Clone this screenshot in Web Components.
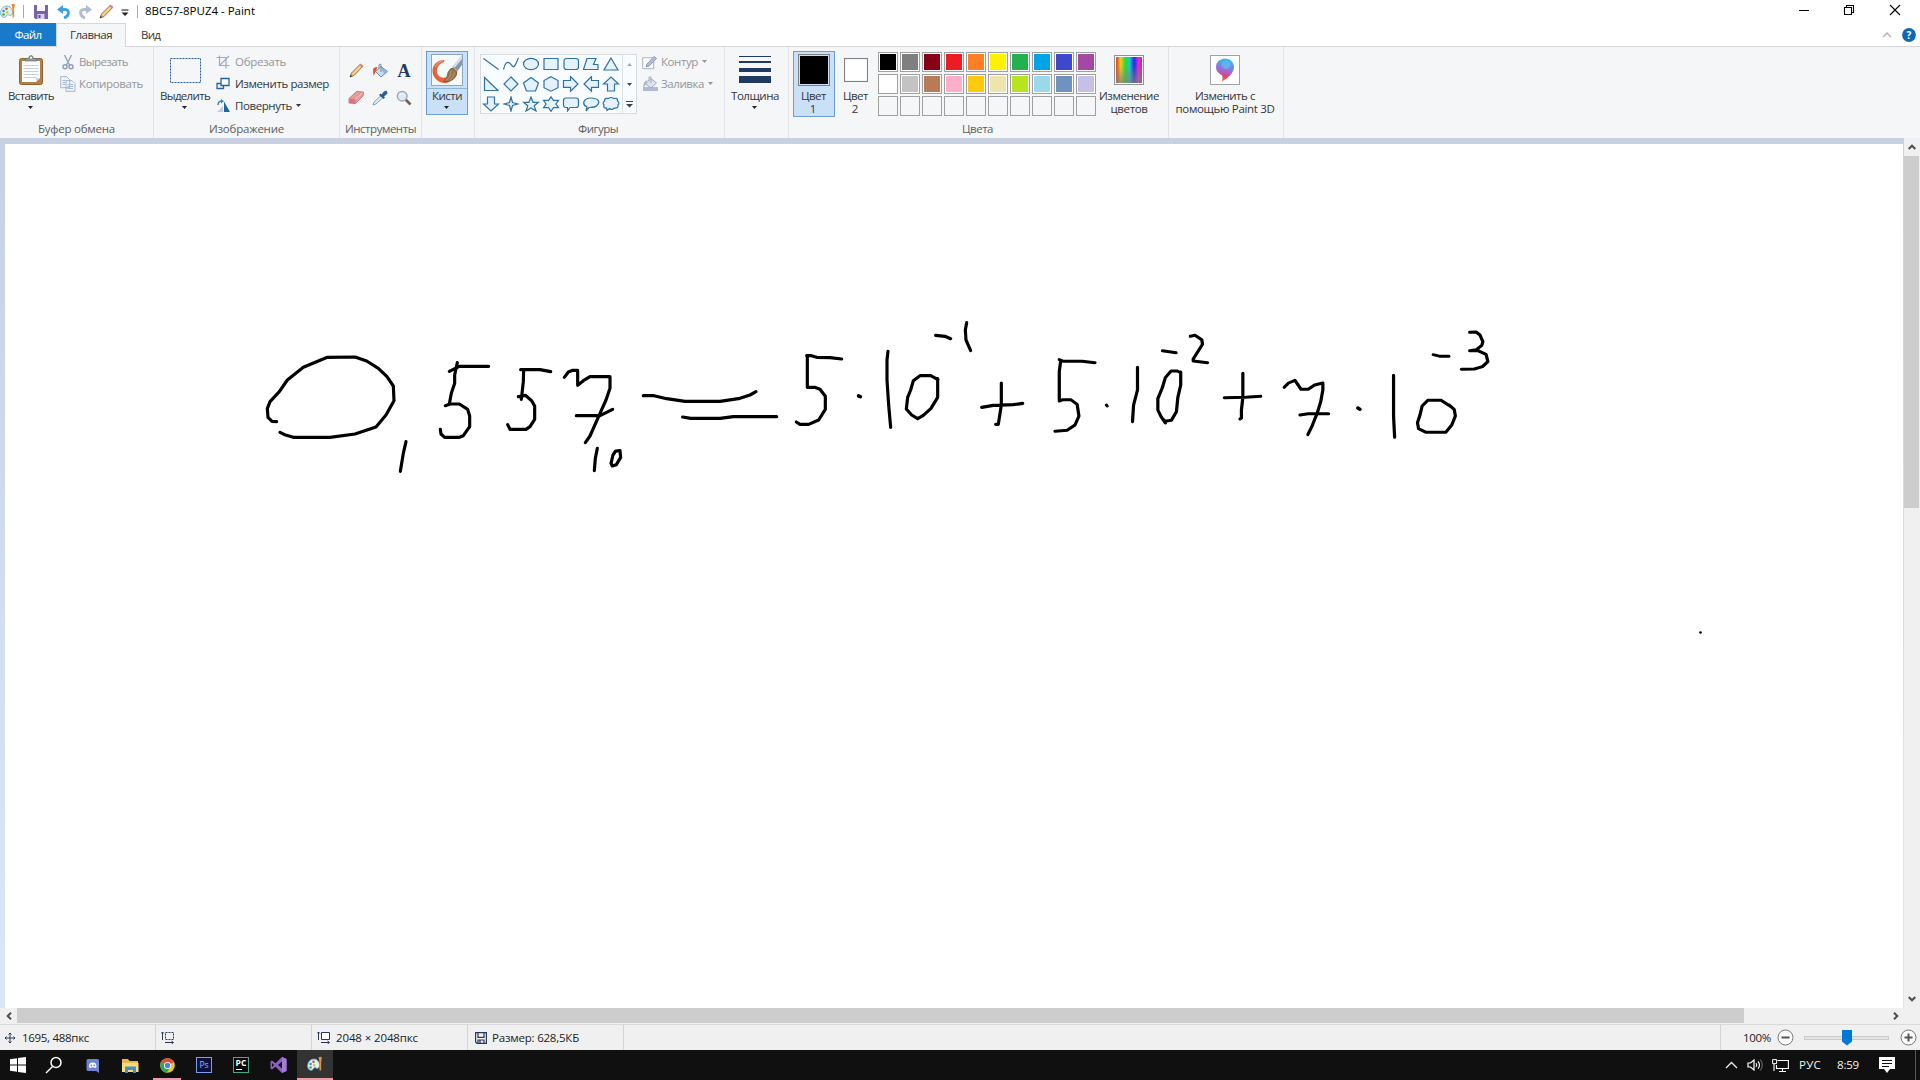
<!DOCTYPE html>
<html lang="ru">
<head>
<meta charset="utf-8">
<title>8BC57-8PUZ4 - Paint</title>
<style>
  html, body {
    margin: 0;
    width: 1920px;
    height: 1080px;
    overflow: hidden;
    background: #fff;
    font: 11.5px/16px "Open Sans", "Noto Sans", sans-serif;
    color: #33353a;
  }
</style>
</head>
<body>
<paint-app></paint-app>

<script>
const ICONS = {
  palette: [16, 16, `<path d="M7 3C3 3 .6 6.500.6 10c0 3 2 4.800 4.200 4.300 1.800-.4 1.200-2.600 3-2.600s2.200 1.500 3.700.3C14 9.500 12 3 7 3z" fill="#dff0f6" stroke="#5f9fbe" stroke-width=".8"/><circle cx="3.600" cy="8" r="1.300" fill="#3c8ed0"/><circle cx="6.500" cy="5.700" r="1.300" fill="#d9573c"/><circle cx="3.600" cy="11.500" r="1.300" fill="#48a65a"/><circle cx="7.200" cy="9.200" r="1.200" fill="#e9bd2f"/><path d="M11.500 1.500q1.700-1.500 3.500 0l-.8 4.500v8.500h-1.700V6z" fill="#df913b"/>`],
  save: [14, 14, `<path d="M0 0h14v14H1.500L0 12.500z" fill="#7c62a8"/><path d="M3 0h8v6H3z" fill="#fbf9ff"/><path d="M3.500 9h7v5h-7z" fill="#d9d1ea"/><path d="M4.500 10h2v3h-2z" fill="#65499b"/>`],
  undo: [14, 14, `<path d="M2 4.500h6c5 0 4.500 6.500-1 8.500" fill="none" stroke="#3aa3df" stroke-width="2.800"/><path d="M6 0v9L0 4.500z" fill="#3aa3df"/>`],
  redo: [14, 14, `<path d="M12 4.500H6c-5 0-4.500 6.500 1 8.500" fill="none" stroke="#aebdce" stroke-width="2.800"/><path d="M8 0v9l6-4.500z" fill="#aebdce"/>`],
  pencil: [15, 15, `<path d="M1 14l1.500-4L11 1.500l2.300 2.300L5 12.500z" fill="#f5c67b" stroke="#8d6642" stroke-width=".9"/><path d="M10.500 1.500l1-1 3 2.500-1.300 1.400z" fill="#d98277"/><path d="M1 14l.7-2.300 1.600 1.600z" fill="#333"/><path d="M4 10.500L11 4" stroke="#fbe1a6"/>`],
  qat: [8, 8, `<path d="M.5 1h7" stroke="#333" stroke-width="1.200"/><path d="M.5 3.500h7L4 7z" fill="#222"/>`],
  minimize: [12, 12, `<path d="M1 6.500h10" stroke="#000"/>`],
  restore: [12, 12, `<path d="M1.500 3.500h7v7h-7zM3.500 3V1.500h7v7H9" fill="none" stroke="#000" stroke-width="1.100"/>`],
  close: [12, 12, `<path d="M1 1l10 10M11 1L1 11" stroke="#000" stroke-width="1.100"/>`],
  collapse: [10, 6, `<path d="M1 5l4-4 4 4" fill="none" stroke="#b5b2b2" stroke-width="1.500"/>`],
  help: [14, 14, `<circle cx="7" cy="7" r="6.900" fill="#0f67b7"/>`],

  paste: [26, 31, `<rect x="1.500" y="3.500" width="23" height="26" rx="2" fill="#b38045" stroke="#8e6437"/><path d="M4 6h18v17l-4 4H4z" fill="#fff"/><path d="M5.500 10.500h15M5.500 13.500h15M5.500 16.500h15M5.500 19.500h15M5.500 22.500h13" stroke="#bcd3e4"/><path d="M22 23l-4 4v-4z" fill="#cbd4dd"/><path d="M7 6V3.500h3.500Q11 .5 13 .5t2.500 3H19V6z" fill="#8f979d" stroke="#686e73" stroke-width=".7"/><circle cx="13" cy="2.700" r="1" fill="#fff"/>`],
  cut: [16, 16, `<path d="M4.500 1l5 10M11.500 1l-5 10" stroke="#9aaac4" stroke-width="1.600"/><circle cx="5" cy="12.800" r="2" fill="none" stroke="#8b9dbd" stroke-width="1.400"/><circle cx="11" cy="12.800" r="2" fill="none" stroke="#8b9dbd" stroke-width="1.400"/>`],
  copy: [16, 16, `<path d="M.7.7h6l3 3v8h-9zM6 4.600h6l3 3v7.700H6z" fill="#f2f6fb" stroke="#a7b6cc"/><path d="M2.500 4.500h3M2.500 6.500h3M2.500 8.500h3M7.500 8.500h5.500M7.500 10.500h5.500M7.500 12.500h5.500" stroke="#a9bbd3"/>`],
  select: [31, 25, `<rect x=".5" y=".5" width="30" height="24" fill="none" stroke="#2c5b99" stroke-dasharray="2 1"/>`],
  crop: [14, 14, `<path d="M.500 2.500h9.500v11M3.500.500v10h10M3.500 10.500L13 1" fill="none" stroke="#9cacc6" stroke-width="1.200"/>`],
  resize: [14, 14, `<path d="M5 1.500h8v7H5z" fill="#f7fafd" stroke="#27649b" stroke-width="1.300"/><path d="M5 6.500H1v5h6.500v-3" fill="none" stroke="#27649b" stroke-width="1.300"/>`],
  rotate: [15, 14, `<path d="M8 2.500l6 10.500H8z" fill="#1d669f"/><path d="M7 7v6H1z" fill="#c0cfda"/><path d="M2 6q0-4 4-4" fill="none" stroke="#3f87bd" stroke-width="1.500"/><path d="M5 0l3 2.200L5 4.500z" fill="#3f87bd"/>`],

  bucket: [17, 16, `<path d="M3.500 8.500L9 3.500l6.500 5-6.500 5.500z" fill="#cadbed" stroke="#718ba9"/><path d="M9 9V1.500Q8 .2 7 2v3" fill="none" stroke="#73879e"/><path d="M9 4l6 4.500-3 2.500z" fill="#8bb2dc"/><path d="M5.500 4Q1 4 1 7l.5 6 2-4z" fill="#d6592e"/>`],
  eraser: [16, 15, `<path d="M1 8.500L8.500 1.500l7 .5-.5 4L7.500 13.500 1 13z" fill="#e99a98" stroke="#b36b6d" stroke-width=".8"/><path d="M1 8.700l6.500.4v4.300L1 13z" fill="#dd7376"/><path d="M7.500 9l7.500-6.500" stroke="#f6c6c2"/>`],
  picker: [16, 16, `<path d="M1 15l1-3 7-6.500 2 2L4 14z" fill="#dbe8f1" stroke="#7992a9" stroke-width=".8"/><path d="M7 5l1.500-1.500 1 1L12 1.500q2-1.500 3 0t0 2.500L12 6.500l1 1L11.500 9z" fill="#285f99"/>`],
  zoom: [16, 16, `<path d="M9.500 9.500l5 5" stroke="#6d625c" stroke-width="2.600"/><circle cx="6.200" cy="6.200" r="4.800" fill="#dceaf5" stroke="#9babba" stroke-width="1.500"/><path d="M3.500 5.500q1-2 3-2" fill="none" stroke="#fff"/>`],
  brush: [32, 32, `<rect x=".5" y=".5" width="31" height="31" fill="#f7fafb" stroke="#8da7c2"/><path d="M13.500 6C5 6 1 12 1.500 18c.5 6 6 11 12 11 4 0 7-2 8-5l-3-3c-2 3-8 4-11 .5C4 17 6 10.500 13 8z" fill="#e2643c"/><path d="M4 13q2-5 8-6.500" fill="none" stroke="#f3a58c"/><path d="M31 1.500v9.500l-4.500 6-5-4z" fill="#8497ac"/><path d="M31 1.500L21.500 12l2.200 1.800L31 5z" fill="#d3dee9"/><path d="M17 18.500q2-4.500 5-4.500l4 3.500q.500 4-4 8-4 3-9.500 2Q16.500 24 17 18.500z" fill="#94754d" stroke="#765a3b" stroke-width=".8"/><path d="M20 17q0 6-5 9.500M23.500 18.500q-1 5-5.500 8" fill="none" stroke="#bd9c6c"/>`],
  outline: [16, 15, `<path d="M.7 2.700h11v11H.7z" fill="#fafbfe" stroke="#a8b4ca"/><path d="M4 12l1-3 7-7.500 2.500 2L7 11z" fill="#b5bbd4" stroke="#8e9abb"/>`],
  fill: [17, 16, `<path d="M1 11h15v4H1z" fill="#aebbd0"/><path d="M3.500 8L9 2.500 14.500 7 9 12z" fill="#dce3ed" stroke="#9eacc2"/><path d="M9 7V1H7v4" fill="none" stroke="#9eacc2"/><path d="M5.500 4Q1 5 1.500 12L4 8z" fill="#a3b2cb"/>`],
  size: [32, 28, `<path d="M0 0h32v1H0zM0 5h32v2H0zM0 12h32v4H0zM0 20h32v7H0z" fill="#20395f"/>`],
  down: [5, 3, `<path d="M0 0h5L2.500 3z" fill="currentColor"/>`],
  up: [5, 3, `<path d="M0 3h5L2.500 0z" fill="currentColor"/>`],
  more: [7, 7, `<path d="M0 0h7v1H0zM0 3h7L3.500 6.500z" fill="currentColor"/>`],
  spectrum: [30, 30, `<defs><linearGradient id="h"><stop offset="0" stop-color="#e33b1c"/><stop offset=".18" stop-color="#e5d321"/><stop offset=".36" stop-color="#27dc31"/><stop offset=".52" stop-color="#18c8da"/><stop offset=".7" stop-color="#2e27dc"/><stop offset=".87" stop-color="#e02bdc"/><stop offset="1" stop-color="#d3246b"/></linearGradient><linearGradient id="v" x2="0" y2="1"><stop offset=".3" stop-color="#808080" stop-opacity="0"/><stop offset="1" stop-color="#808080" stop-opacity=".75"/></linearGradient></defs><rect x=".5" y=".5" width="29" height="29" fill="#fff" stroke="#929292"/><path d="M2 2h26v26H2z" fill="url(#h)"/><path d="M2 2h26v26H2z" fill="url(#v)"/>`],
  paint3d: [30, 30, `<defs><linearGradient id="p" x1=".6" y1="0" x2=".4" y2="1"><stop offset="0" stop-color="#35c0ea"/><stop offset=".38" stop-color="#7387e5"/><stop offset=".6" stop-color="#b759c5"/><stop offset=".78" stop-color="#e83d67"/><stop offset="1" stop-color="#f17d35"/></linearGradient></defs><rect x=".5" y=".5" width="29" height="29" fill="#fff" stroke="#a0a3a6"/><path d="M15 3.500c-5 0-9 3.600-9 8.500 0 4.500 3 6 6 8.500 1.300 1.500 0 3.500 0 6 5-3 12-8 12-14.500 0-5-4-8.500-9-8.500z" fill="url(#p)"/><circle cx="16" cy="10" r="4" fill="#69d5f5" opacity=".45"/>`],

  arrowUp: [8, 6, `<path d="M.700 5L4 1.700 7.300 5" fill="none" stroke="#4d4d4d" stroke-width="2"/>`],
  arrowDown: [8, 6, `<path d="M.700 1L4 4.300 7.300 1" fill="none" stroke="#4d4d4d" stroke-width="2"/>`],
  arrowLeft: [6, 8, `<path d="M5 .7L1.700 4 5 7.300" fill="none" stroke="#4d4d4d" stroke-width="2"/>`],
  arrowRight: [6, 8, `<path d="M1 .7L4.300 4 1 7.300" fill="none" stroke="#4d4d4d" stroke-width="2"/>`],
  move: [12, 12, `<path d="M6 1v10M1 6h10M4.500 2.500L6 1l1.500 1.500M4.500 9.500L6 11l1.500-1.500M2.500 4.500L1 6l1.500 1.500M9.500 4.500L11 6 9.500 7.500" fill="none" stroke="#24395b"/>`],
  selSize: [14, 13, `<path d="M4.500 1.500h8v7h-8z" fill="none" stroke="#24395b" stroke-dasharray="2 1"/><path d="M1.500 9V1M0 2.500L1.500 1 3 2.500M4 11.500h8M10.500 10l2 1.500-2 1.500" fill="none" stroke="#24395b"/>`],
  imgSize: [14, 13, `<path d="M4.500 1.500h8v7h-8z" fill="#fff" stroke="#24395b"/><path d="M1.500 9V1M0 2.500L1.500 1 3 2.500M4 11.500h8M10.500 10l2 1.500-2 1.500" fill="none" stroke="#24395b"/>`],
  disk: [12, 12, `<path d="M.6.600h10.800v10.800H2L.6 10zM3 .600v4.800h6V.600M3 11V8h6v3M5 8.500V11" fill="none" stroke="#24395b" stroke-width="1.200"/>`],
  zoomOut: [17, 17, `<circle cx="8.500" cy="8.500" r="7.500" fill="#fafafa" stroke="#777"/><path d="M4.500 8.500h8" stroke="#555" stroke-width="2"/>`],
  zoomIn: [17, 17, `<circle cx="8.500" cy="8.500" r="7.500" fill="#fafafa" stroke="#777"/><path d="M4.500 8.500h8M8.500 4.500v8" stroke="#555" stroke-width="2"/>`],

  windows: [16, 16, `<path d="M0 2.300L7 1.300v6.200H0zM8 1.100L16 0v7.500H8zM0 8.500h7v6.200l-7-1zM8 8.500h8V16l-8-1.100z" fill="#fff"/>`],
  search: [18, 18, `<circle cx="11" cy="6.500" r="5" fill="none" stroke="#fff" stroke-width="1.500"/><path d="M7.500 10.500L1 17" stroke="#fff" stroke-width="1.500"/>`],
  discord: [14, 15, `<path d="M2 1h9.500q1.500 0 1.500 1.500V15l-3-2H2q-1.500 0-1.500-1.500v-9Q.5 1 2 1z" fill="#6f83cf"/><path d="M3 9q0-3 1.200-4 2.500-1 5 0Q10.500 6 10.500 9q-1 1-2.200 1l-.5-.7H5.700l-.5.7Q4 10 3 9z" fill="#fff"/><circle cx="5.300" cy="7.500" r=".9" fill="#6f83cf"/><circle cx="8.300" cy="7.500" r=".9" fill="#6f83cf"/>`],
  explorer: [17, 15, `<path d="M0 1h6l1.500 2H16v11H0z" fill="#e9b64a"/><path d="M0 5h16.500v9H0z" fill="#ffdb76"/><path d="M3 8.500h11V15h-3v-3H6v3H3z" fill="#3c93cf"/>`],
  chrome: [15, 15, `<circle cx="7.500" cy="7.500" r="7.300" fill="#e8c632"/><path d="M7.500 7.500L1 4Q3.500.2 7.500.2T14 4z" fill="#dc4b3e"/><path d="M7.500 7.500L1 4Q-.8 8 1.500 11.500T7 14.800l3-5.500z" fill="#36a35a"/><circle cx="7.500" cy="7.500" r="3.500" fill="#fff"/><circle cx="7.500" cy="7.500" r="2.700" fill="#4384dd"/>`],
  vs: [17, 16, `<path d="M12 0l4.500 2v12L12 16 5.500 9.800 2 12.500.5 11.500v-7L2 3.500l3.500 2.700zM12 4.500L8 8l4 3.500zM2 6v4l2-2z" fill="#8c5fc5" fill-rule="evenodd"/><path d="M12 0l4.500 2v12L12 16z" fill="#a47ad8"/>`],
  chevron: [13, 8, `<path d="M1 7l5.500-5.500L12 7" fill="none" stroke="#eee" stroke-width="1.300"/>`],
  speaker: [17, 14, `<path d="M1 5h2.500l3.500-3v10L3.500 9H1z" fill="none" stroke="#fff" stroke-width="1.200"/><path d="M9 5q1.500 2 0 4M11 3.300q3 3.700 0 7.400" fill="none" stroke="#fff" stroke-width="1.100"/><path d="M13.300 1.500q4 5.500 0 11" fill="none" stroke="#777"/>`],
  network: [17, 15, `<path d="M5.500 2.500h10.900v8H4.500v-3.500M10.500 10.500V14M7 13.500h7M2 6v7" fill="none" stroke="#fff" stroke-width="1.100"/><path d="M.600 1.600h4v4h-4z" fill="#111" stroke="#fff"/>`],
  notice: [16, 16, `<path d="M0 0h16v12h-5l-3 4-3-4H0z" fill="#fff"/><path d="M3 3.500h10M3 6.500h10M3 9.500h7" stroke="#111"/>`],
};

const SHAPES = [
  '<path d="M1.500 2.500l15 11"/>',
  '<path d="M1.500 13.500C3 7 5 5 7.500 7s3 5 5 3 3-7 4-8"/>',
  '<ellipse cx="9" cy="8" rx="7.500" ry="5.700"/>',
  '<path d="M2 2.500h14v11H2z"/>',
  '<rect x="2" y="2.500" width="14.500" height="11" rx="2.500"/>',
  '<path d="M5 2.500h9l-2.500 6H16v5H1.500z"/>',
  '<path d="M9 2l7 12H2z"/>',
  '<path d="M2.500 1.500v13H16z"/>',
  '<path d="M9 1l7 7-7 7-7-7z"/>',
  '<path d="M9 1.500l7.500 5.500-3 8h-9l-3-8z"/>',
  '<path d="M9 .800l7 3.700v7.200l-7 3.500-7-3.500V4.500z"/>',
  '<path d="M1.500 4.500h7v-4L16 8l-7.500 7.300v-4h-7z"/>',
  '<path d="M16.500 4.500h-7v-4L2 8l7.500 7.300v-4h7z"/>',
  '<path d="M5.500 15V8h-4L9 1l7.500 7h-4v7z"/>',
  '<path d="M5.500 1v7h-4L9 15l7.500-7h-4V1z"/>',
  '<path d="M9 1l1.500 5.500L16 8l-5.500 1.500L9 15l-1.500-5.500L2 8l5.500-1.500z"/>',
  '<path d="M9 1l2 5.300h5.500l-4.300 3.500L14 15l-5-3-5 3 1.800-5.200L1.500 6.300H7z"/>',
  '<path d="M9 .800l2.500 3.600h5L14 8l2.500 3.700h-5L9 15.300l-2.500-3.600h-5L4 8 1.500 4.400h5z"/>',
  '<path d="M4 2h10q2.500 0 2.500 2.500V9q0 2.500-2.500 2.500H8L5.500 15v-3.500H4Q1.500 11.500 1.500 9V4.500Q1.500 2 4 2z"/>',
  '<path d="M5 11C-1 8 2 2 9 2s10 4 6 7.500c-2 2-5 2-8 2L4 15z"/>',
  '<path d="M4.500 12Q1 12.500 2 9q-2-2 .5-4 0-3.500 4-2.500Q9 .5 11.500 2.500 16 1.500 15.500 5q2.500 2 .5 4 .5 3.500-3.500 3-3 2.500-5 .5L5 14.500z"/>',
];

const PALETTE = [
  '#000000', '#7f7f7f', '#880015', '#ed1c24', '#ff7f27', '#fff200', '#22b14c', '#00a2e8', '#3f48cc', '#a349a4',
  '#ffffff', '#c3c3c3', '#b97a57', '#ffaec9', '#ffc90e', '#efe4b0', '#b5e61d', '#99d9ea', '#7092be', '#c8bfe7',
];

function define(name, html, setup) {
  const template = document.createElement('template');
  template.innerHTML = html;

  customElements.define(name, class extends HTMLElement {
    connectedCallback() {
      if (this.shadowRoot) return;
      this.attachShadow({ mode: 'open' });
      this.shadowRoot.appendChild(template.content.cloneNode(true));
      if (setup) setup(this, this.shadowRoot);
    }
  });
}

// Inline svg from the ICONS table
define('ui-icon', `
  <style>
    :host { display: block; flex: none; }
    svg { display: block; }
  </style>
`, (host, root) => {
  const [w, h, body] = ICONS[host.getAttribute('name')];
  root.innerHTML += `<svg width="${w}" height="${h}" viewBox="0 0 ${w} ${h}">${body}</svg>`;
});

// One line of text, tracked so that it takes up "fit" pixels
define('ui-text', `
  <style>
    :host { display: block; flex: none; white-space: nowrap; }
    span { display: inline-block; }
  </style>
  <span><slot></slot></span>
`, (host, root) => {
  const fit = Number(host.getAttribute('fit'));
  if (!fit) return;
  const span = root.querySelector('span');
  const gap = (fit - span.getBoundingClientRect().width) / host.textContent.length;
  span.style.letterSpacing = gap.toFixed(3) + 'px';
  host.style.width = fit + 'px';
});

define('title-bar', `
  <style>
    :host { display: flex; align-items: center; height: 23px; background: #fff; color: #000; }
    .sep { width: 1px; height: 13px; background: #aaa; }
    .window { display: flex; align-items: center; gap: 34px; margin: -3px 19px 0 auto; }
  </style>
  <ui-icon name="palette" style="margin-top: -2px"></ui-icon>
  <i class="sep" style="margin: 0 10px 0 7px"></i>
  <ui-icon name="save"></ui-icon>
  <ui-icon name="undo" style="margin-left: 9px"></ui-icon>
  <ui-icon name="redo" style="margin-left: 7px"></ui-icon>
  <ui-icon name="pencil" style="margin-left: 7px"></ui-icon>
  <ui-icon name="qat" style="margin: 2px 0 0 7px"></ui-icon>
  <i class="sep" style="margin: 0 7px 0 8px"></i>
  <ui-text fit="110" style="margin-top: -1px">8BC57-8PUZ4 - Paint</ui-text>
  <div class="window">
    <ui-icon name="minimize" style="margin-right: -1px"></ui-icon>
    <ui-icon name="restore"></ui-icon>
    <ui-icon name="close"></ui-icon>
  </div>
`);

define('ribbon-tabs', `
  <style>
    :host { display: flex; height: 24px; box-sizing: border-box; border-bottom: 1px solid #d5d7da; background: #fff; }
    .tab { display: flex; justify-content: center; padding-top: 4px; box-sizing: border-box; }
    .file { width: 56px; background: #1979ca; color: #fff; }
    .active { width: 70px; height: 24px; border: 1px solid #d5d7da; border-bottom: 0; padding-top: 3px; background: #f5f6f7; }
    .view { width: 49px; }
    .right { display: flex; align-items: center; gap: 10px; margin: 0 4px 0 auto; }
    .help { display: grid; color: #fff; font-weight: 700; font-size: 10px; line-height: 14px; text-align: center; }
    .help > * { grid-area: 1 / 1; }
  </style>
  <div class="tab file"><ui-text fit="27">Файл</ui-text></div>
  <div class="tab active"><ui-text fit="42">Главная</ui-text></div>
  <div class="tab view"><ui-text fit="19">Вид</ui-text></div>
  <div class="right">
    <ui-icon name="collapse"></ui-icon>
    <div class="help"><ui-icon name="help"></ui-icon><span>?</span></div>
  </div>
`);

define('ribbon-group', `
  <style>
    :host { display: flex; flex-direction: column; flex: none; box-sizing: border-box; height: 91px;
      border-right: 1px solid #e1e3e6; }
    .body { display: flex; align-items: flex-start; height: 74px; padding-top: 4px; box-sizing: border-box; }
    .label { display: flex; justify-content: center; padding-right: var(--label-end, 0); color: #5c5f63; }
  </style>
  <div class="body"><slot></slot></div>
  <div class="label"></div>
`, (host, root) => {
  const text = host.getAttribute('label');
  if (text) root.querySelector('.label').innerHTML = `<ui-text fit="${host.getAttribute('fit')}">${text}</ui-text>`;
});

// Tall button: picture on top, caption lines below it
define('big-button', `
  <style>
    :host { display: flex; flex-direction: column; align-items: center; flex: none; box-sizing: border-box; height: 66px; }
    .pic { display: flex; align-items: center; justify-content: center; box-sizing: border-box; height: 37px; padding-top: 1px; flex: none; }
    .text { display: flex; flex-direction: column; align-items: center; line-height: 16px; }
    ::slotted(ui-text:nth-of-type(2)) { margin-top: -3px; }
    ui-icon { margin: 2px 1px 0 0; color: #222; }
    :host([active]) { background: #c9e0f7; box-shadow: inset 0 0 0 1px #6c9ed0; }
  </style>
  <div class="pic"><slot name="pic"></slot></div>
  <div class="text"><slot></slot></div>
`, (host, root) => {
  if (host.hasAttribute('menu')) root.innerHTML += '<ui-icon name="down"></ui-icon>';
});

define('row-button', `
  <style>
    :host { display: flex; align-items: center; height: 22px; }
    .pic { display: flex; align-items: center; width: 19px; flex: none; }
    .arrow { margin: -1px 0 0 4px; }
    :host([disabled]) { color: #93969b; }
  </style>
  <div class="pic"></div>
  <slot></slot>
`, (host, root) => {
  root.querySelector('.pic').innerHTML = `<ui-icon name="${host.getAttribute('icon')}"></ui-icon>`;
  if (host.hasAttribute('menu')) root.innerHTML += '<ui-icon class="arrow" name="down"></ui-icon>';
});

define('tool-grid', `
  <style>
    :host { display: grid; grid-template-columns: repeat(3, 24px); grid-auto-rows: 27px; place-items: center; }
    b { font: bold 18px/18px "Liberation Serif", serif; color: #1e3a63; }
  </style>
  <ui-icon name="pencil"></ui-icon>
  <ui-icon name="bucket"></ui-icon>
  <b>A</b>
  <ui-icon name="eraser"></ui-icon>
  <ui-icon name="picker"></ui-icon>
  <ui-icon name="zoom"></ui-icon>
`);

define('shape-gallery', `
  <style>
    :host { display: flex; box-sizing: border-box; width: 157px; height: 60px; border: 1px solid #d6dbe0; background: #f9fcfe; }
    .shapes { display: grid; grid-template-columns: repeat(7, 20px); grid-auto-rows: 20px; align-content: start; width: 141px; margin-top: -1px; }
    svg { width: 18px; height: 16px; margin: 2px 1px; fill: #e4f3fb; stroke: #31709f; stroke-width: 1.2; }
    svg.line { fill: none; }
    .scroll { display: grid; grid-template-rows: repeat(3, 20px); place-items: center; flex: 1; border-left: 1px solid #dde2e6; margin-top: -1px; color: #444; }
  </style>
  <div class="shapes"></div>
  <div class="scroll">
    <ui-icon name="up" style="color: #aaa"></ui-icon>
    <ui-icon name="down"></ui-icon>
    <ui-icon name="more"></ui-icon>
  </div>
`, (host, root) => {
  root.querySelector('.shapes').innerHTML = SHAPES
    .map((shape, i) => `<svg class="${i < 2 ? 'line' : ''}" viewBox="0 0 18 16">${shape}</svg>`)
    .join('');
});

define('color-grid', `
  <style>
    :host { display: grid; grid-template-columns: repeat(10, 20px); grid-auto-rows: 20px; gap: 2px; }
    i { box-sizing: border-box; border: 1px solid #a0a0a0; }
    i.set { padding: 1px; background-clip: content-box; box-shadow: inset 0 0 0 1px #fff; }
  </style>
`, (host, root) => {
  for (let n = 0; n < 30; n++) {
    const cell = document.createElement('i');
    if (PALETTE[n]) {
      cell.className = 'set';
      cell.style.backgroundColor = PALETTE[n];
    }
    root.appendChild(cell);
  }
});

define('paint-ribbon', `
  <style>
    :host { display: flex; height: 91px; background: #f5f6f7; }
    .rows { display: flex; flex-direction: column; }
    .swatch { box-sizing: border-box; border: 1px solid #808080; background-clip: content-box; padding: 1px; }
    .brushes { background: linear-gradient(#8ab4dc, #8ab4dc) 1px 37px / 40px 1px no-repeat #c9e0f7; }
  </style>
  <ribbon-group label="Буфер обмена" fit="77" style="width: 154px">
    <big-button menu style="width: 62px">
      <ui-icon slot="pic" name="paste"></ui-icon>
      <ui-text fit="46">Вставить</ui-text>
    </big-button>
    <div class="rows" style="margin-left: -2px">
      <row-button disabled icon="cut"><ui-text fit="49">Вырезать</ui-text></row-button>
      <row-button disabled icon="copy"><ui-text fit="64">Копировать</ui-text></row-button>
    </div>
  </ribbon-group>

  <ribbon-group label="Изображение" fit="75" style="width: 186px">
    <big-button menu style="width: 62px">
      <ui-icon slot="pic" name="select"></ui-icon>
      <ui-text fit="50">Выделить</ui-text>
    </big-button>
    <div class="rows">
      <row-button disabled icon="crop"><ui-text fit="51">Обрезать</ui-text></row-button>
      <row-button icon="resize"><ui-text fit="94">Изменить размер</ui-text></row-button>
      <row-button menu icon="rotate"><ui-text fit="57">Повернуть</ui-text></row-button>
    </div>
  </ribbon-group>

  <ribbon-group label="Инструменты" fit="71" style="width: 82px">
    <tool-grid style="margin: 6px 0 0 4px"></tool-grid>
  </ribbon-group>

  <ribbon-group style="width: 53px">
    <big-button class="brushes" active menu style="width: 42px; height: 64px; margin-left: 4px">
      <ui-icon slot="pic" name="brush"></ui-icon>
      <ui-text fit="30">Кисти</ui-text>
    </big-button>
  </ribbon-group>

  <ribbon-group label="Фигуры" fit="40" style="width: 250px; --label-end: 3px">
    <shape-gallery style="margin: 3px 5px 0 5px"></shape-gallery>
    <div class="rows">
      <row-button disabled menu icon="outline"><ui-text fit="37">Контур</ui-text></row-button>
      <row-button disabled menu icon="fill"><ui-text fit="43">Заливка</ui-text></row-button>
    </div>
  </ribbon-group>

  <ribbon-group style="width: 64px">
    <big-button menu style="width: 60px">
      <ui-icon slot="pic" name="size"></ui-icon>
      <ui-text fit="48">Толщина</ui-text>
    </big-button>
  </ribbon-group>

  <ribbon-group label="Цвета" fit="31" style="width: 380px; --label-end: 2px">
    <big-button active style="width: 42px; margin-left: 4px">
      <i slot="pic" class="swatch" style="width: 32px; height: 32px; background-color: #000"></i>
      <ui-text fit="25" style="margin-right: 1px">Цвет</ui-text>
      <ui-text style="margin-right: 2px">1</ui-text>
    </big-button>
    <big-button style="width: 42px">
      <i slot="pic" class="swatch" style="width: 24px; height: 24px; background-color: #fff"></i>
      <ui-text fit="25" style="margin-right: 1px">Цвет</ui-text>
      <ui-text style="margin-right: 2px">2</ui-text>
    </big-button>
    <color-grid style="margin: 1px 0 0 1px"></color-grid>
    <big-button style="width: 66px">
      <ui-icon slot="pic" name="spectrum"></ui-icon>
      <ui-text fit="60">Изменение</ui-text>
      <ui-text fit="37">цветов</ui-text>
    </big-button>
  </ribbon-group>

  <ribbon-group style="width: 115px">
    <big-button style="width: 112px">
      <ui-icon slot="pic" name="paint3d"></ui-icon>
      <ui-text fit="60">Изменить с</ui-text>
      <ui-text fit="99">помощью Paint 3D</ui-text>
    </big-button>
  </ribbon-group>
`);

define('scroll-bar', `
  <style>
    :host { display: flex; align-items: flex-start; background: #f0f0f0; }
    :host([vertical]) { flex-direction: column; }
    .end { display: flex; align-items: center; justify-content: center; width: 17px; height: 15px; flex: none; }
    :host([vertical]) .end { width: 15px; height: 18px; }
    .thumb { background: #cdcdcd; width: var(--size); height: 15px; flex: none; }
    :host([vertical]) .thumb { width: 15px; height: var(--size); }
    .track { flex: 1; }
  </style>
`, (host, root) => {
  const [a, b] = host.hasAttribute('vertical') ? ['arrowUp', 'arrowDown'] : ['arrowLeft', 'arrowRight'];
  root.innerHTML += `
    <div class="end"><ui-icon name="${a}"></ui-icon></div>
    <div class="thumb"></div>
    <div class="track"></div>
    <div class="end"><ui-icon name="${b}"></ui-icon></div>
  `;
});

// The drawing itself, pen strokes three pixels wide
define('paint-canvas', `
  <style>
    :host { display: block; overflow: hidden; background: #fff; }
    svg { display: block; }
    g { fill: none; stroke: #000; stroke-linecap: round; stroke-linejoin: round; }
  </style>
  <svg width="1898" height="864" viewBox="5 144 1898 864">
    <g transform="translate(250 330) scale(.33333)" stroke-width="9.500">
      <path d="M80 275L66 274 54 262 52 236 60 215 88 185 112 150 160 112 232 82 315 81 350 93 385 115 411 140 430 168 432 212 408 255 378 291 315 312 240 322H130L104 314 90 307"/>
      <path d="M468 335L460 370 451 424"/>
      <path d="M622 98L614 135V160L604 190 598 222M598 124L628 109H716M586 227L600 222H628L653 238 659 258V290L640 317 628 322H584L573 312 571 298"/>
      <path d="M821 120L820 155 814 208M812 119H870L902 125M805 200L826 196 845 212 854 228V268L840 290 828 298H780L773 284"/>
      <path d="M943 142L955 126 968 121H983V166L1000 152 1020 140H1080V175L1068 210 1047 257 1020 318 1006 338M979 257H1050L1088 238"/>
      <path d="M1042 355L1036 385 1033 422M1110 363L1112 382 1099 404 1087 408 1083 400 1089 375 1097 363 1110 362"/>
    </g>
    <g transform="translate(630 310) scale(.33333)" stroke-width="9.500">
      <path d="M40 257H72L110 266 165 274H270L330 265 360 255 378 245"/>
      <path d="M158 321L182 325H270L310 320H440"/>
      <path d="M530 137H544L560 142 600 143 635 147M532 137V232H554L570 238 586 259V298L566 330 536 343H510L499 336"/>
      <path d="M686 258L691 260" stroke-width="11"/>
      <path d="M774 124L771 150V210L776 285 782 352"/>
      <path d="M924 209L902 197H870L850 212 842 240 833 262 829 297 845 315 863 326 880 316 903 295 923 262V206"/>
      <path d="M917 76L945 79 962 86M1010 38L1006 60 1008 90 1022 122"/>
      <path d="M1114 219V285L1105 343H1097M1055 292L1090 286 1150 284 1178 280"/>
    </g>
    <g transform="translate(960 310) scale(.35714 .33333)" stroke-width="9">
      <path d="M278 149L290 154H342L378 158M282 152L278 185V273L288 269H310L328 283 333 318 322 345 300 361 266 364"/>
      <path d="M410 285L412 288"/>
      <path d="M497 172V240L486 285 483 335"/>
      <path d="M618 188L608 183H591L575 203 566 235 554 266V300L563 320 575 339M618 186V225L610 262 606 305 592 331 575 334 566 325"/>
      <path d="M567 122L605 128M645 79L658 76 677 89 679 103 653 147V153L693 158"/>
      <path d="M792 190V262L788 300V324L784 327M740 263L800 262 842 259"/>
      <path d="M908 232L920 219 938 211 955 238H975L993 225 1016 219V240L1010 275 1000 310 985 350 974 374M952 315L975 311H1032"/>
      <path d="M1114 294L1120 298" stroke-width="10"/>
      <path d="M1214 196V320L1217 382"/>
      <path d="M1375 290L1347 271H1310L1294 288 1288 315 1281 338 1284 356 1305 367H1360L1377 345 1387 318 1384 299 1370 285"/>
      <path d="M1325 134L1345 139H1369M1427 67L1445 66 1456 75 1464 95 1461 106 1446 119 1427 122H1450L1473 133 1478 155 1463 170 1440 177 1404 178"/>
    </g>
    <circle cx="1700.500" cy="632.500" r="1.300"/>
  </svg>
`);

define('status-bar', `
  <style>
    :host { display: flex; align-items: stretch; height: 26px; background: #f0f0f0; color: #222; border-top: 1px solid #dadada; box-sizing: border-box; }
    .cell { display: flex; align-items: center; box-sizing: border-box; border-right: 1px solid #d4d4d4; }
    .zoom { display: flex; align-items: center; margin-left: auto; padding-left: 22px; border-left: 1px solid #d4d4d4; padding-right: 3px; }
    .slider { display: grid; align-items: center; width: 85px; margin: 0 11px 0 10px; }
    .slider > * { grid-area: 1 / 1; }
    .track { height: 4px; box-sizing: border-box; border: 1px solid #ccc; background: #e3e3e3; }
    .thumb { width: 10px; height: 16px; margin-left: 38px; background: #0078d7; clip-path: polygon(0 0, 100% 0, 100% 75%, 50% 100%, 0 75%); }
  </style>
  <div class="cell" style="width: 156px; padding-left: 4px"><ui-icon name="move"></ui-icon><ui-text fit="67" style="margin-left: 6px">1695, 488пкс</ui-text></div>
  <div class="cell" style="width: 156px; padding-left: 5px"><ui-icon name="selSize"></ui-icon></div>
  <div class="cell" style="width: 156px; padding-left: 5px"><ui-icon name="imgSize"></ui-icon><ui-text fit="82" style="margin-left: 5px">2048 × 2048пкс</ui-text></div>
  <div class="cell" style="width: 156px; padding-left: 7px"><ui-icon name="disk"></ui-icon><ui-text fit="87" style="margin-left: 5px">Размер: 628,5КБ</ui-text></div>
  <div class="zoom">
    <ui-text fit="28">100%</ui-text>
    <ui-icon name="zoomOut" style="margin-left: 6px"></ui-icon>
    <div class="slider"><div class="track"></div><div class="thumb"></div></div>
    <ui-icon name="zoomIn"></ui-icon>
  </div>
`);

define('task-bar', `
  <style>
    :host { display: flex; height: 30px; background: #101010; color: #f2f2f2; }
    .apps { display: flex; gap: 1px; }
    .app { display: flex; align-items: center; justify-content: center; box-sizing: border-box; width: 36px; }
    .app.running { border-bottom: 2px solid #eb9ba6; padding-top: 2px; width: 28px; margin: 0 4px; }
    .app.active { width: 36px; margin: 0; background: #333; }
    .box { box-sizing: border-box; width: 16px; height: 16px; border: 1px solid; font: 8.5px/13px "Open Sans", sans-serif; text-align: center; }
    .ps { background: #09113c; color: #9dbdff; border-color: #7f9dec; }
    .pc { background: #060a0a; color: #fff; border-color: #48a88a; font-weight: 700; line-height: 10px; }
    .pc::after { content: ''; display: block; width: 6px; height: 1px; margin: 1px 2px; background: #fff; }
    .tray { display: flex; align-items: center; margin-left: auto; padding-right: 4px; }
    .desk { width: 1px; height: 30px; background: #555; margin-left: 20px; }
  </style>
  <div class="apps">
    <div class="app"><ui-icon name="windows"></ui-icon></div>
    <div class="app" style="width: 37px"><ui-icon name="search" style="margin-right: 3px"></ui-icon></div>
    <div class="app"><ui-icon name="discord"></ui-icon></div>
    <div class="app"><ui-icon name="explorer"></ui-icon></div>
    <div class="app running"><ui-icon name="chrome"></ui-icon></div>
    <div class="app"><div class="box ps">Ps</div></div>
    <div class="app"><div class="box pc">PC</div></div>
    <div class="app"><ui-icon name="vs"></ui-icon></div>
    <div class="app running active"><ui-icon name="palette" style="margin-top: -2px"></ui-icon></div>
  </div>
  <div class="tray">
    <ui-icon name="chevron"></ui-icon>
    <ui-icon name="speaker" style="margin-left: 9px"></ui-icon>
    <ui-icon name="network" style="margin-left: 8px"></ui-icon>
    <ui-text fit="22" style="margin-left: 10px">РУС</ui-text>
    <ui-text fit="22" style="margin-left: 16px">8:59</ui-text>
    <ui-icon name="notice" style="margin-left: 20px"></ui-icon>
    <i class="desk"></i>
  </div>
`);

define('paint-app', `
  <style>
    :host { display: flex; flex-direction: column; width: 1920px; height: 1080px; }
    .work { display: flex; flex: 1; min-height: 0; }
    .main { display: flex; flex-direction: column; width: 1904px; }
    .area { flex: 1; min-height: 0; box-sizing: border-box; padding: 6px 1px 0 5px; background: linear-gradient(#c8d1e1, #dce7f5); }
    paint-canvas { height: 100%; }
    .side { display: flex; flex-direction: column; width: 16px; background: #f0f0f0; }
  </style>
  <title-bar></title-bar>
  <ribbon-tabs></ribbon-tabs>
  <paint-ribbon></paint-ribbon>
  <div class="work">
    <div class="main">
      <div class="area"><paint-canvas></paint-canvas></div>
      <scroll-bar style="height: 16px; --size: 1727px"></scroll-bar>
    </div>
    <div class="side">
      <scroll-bar vertical style="flex: 1; margin-bottom: 16px; --size: 352px"></scroll-bar>
    </div>
  </div>
  <status-bar></status-bar>
  <task-bar></task-bar>
`);
</script>
</body>
</html>
